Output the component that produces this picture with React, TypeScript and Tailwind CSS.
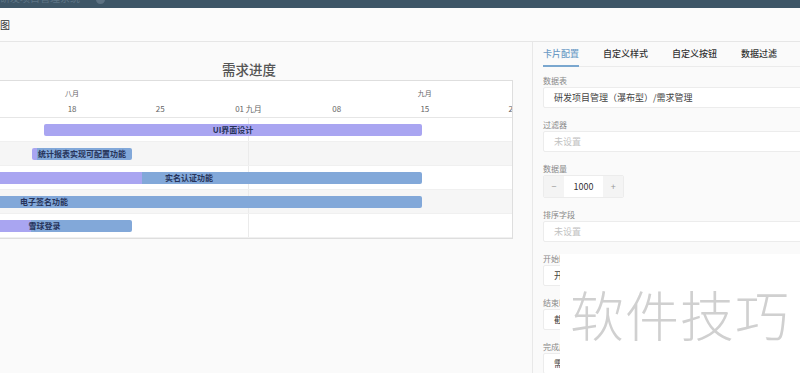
import React from "react";

const weeks = [
  { day: "18", month: "八月" },
  { day: "25" },
  { day: "01 九月" },
  { day: "08" },
  { day: "15", month: "九月" },
  { day: "22" },
];

// x positions are in chart px (chart box begins 15px left of the window)
const tasks = [
  { name: "UI界面设计", start: 58, end: 436, done: 436 },
  { name: "统计报表实现可配置功能", start: 46, end: 146, done: 51 },
  { name: "实名认证功能", start: -30, end: 436, done: 156 },
  { name: "电子签名功能", start: -320, end: 436, done: -320 },
  { name: "雪球登录", start: -29, end: 146, done: 45 },
];

const fields = [
  { label: "数据表", value: "研发项目管理（瀑布型）/需求管理" },
  { label: "过滤器", placeholder: "未设置" },
  { label: "数据量", stepper: true },
  { label: "排序字段", placeholder: "未设置" },
  { label: "开始时间字段", value: "开始时间" },
  { label: "结束时间字段", value: "截止时间" },
  { label: "完成度字段", value: "需求进度" },
];

const tabs = ["卡片配置", "自定义样式", "自定义按钮", "数据过滤"];

const Gantt = () => (
  <div className="-ml-[15px] w-[528px] flex flex-col">
    <div className="h-[38px] flex items-end justify-center pb-[3px]">
      <h1 className="text-[13.5px] leading-[16px] font-medium text-[#555]">需求进度</h1>
    </div>
    <div className="bg-white border border-[#dedede] overflow-hidden">
      <div className="h-[37px] border-b border-[#e6e6e6] flex pl-[42px] text-[#666]">
        {weeks.map((w) => (
          <div key={w.day} className="w-[88.2px] shrink-0 flex flex-col items-center">
            <span className="h-[12px] mt-[6px] text-[7px] leading-[12px]">{w.month ?? ""}</span>
            <span className="mt-[4px] text-[8px] leading-[12px] whitespace-nowrap">{w.day}</span>
          </div>
        ))}
      </div>
      {tasks.map((t, i) => {
        const pct = ((t.done - t.start) / (t.end - t.start)) * 100;
        return (
          <div
            key={t.name}
            className={`relative h-[24px] flex items-center border-b border-[#f0f0f0] ${
              i % 2 === 1 ? "bg-[#f6f6f6]" : "bg-white"
            }`}
          >
            <div className="absolute left-[262px] top-0 bottom-0 w-px bg-[#ebebeb]" />
            <div
              className="relative z-10 shrink-0 h-[12px] rounded-[2px] flex items-center justify-center text-[8px] font-semibold text-[#26335a] whitespace-nowrap"
              style={{
                marginLeft: t.start,
                width: t.end - t.start,
                background: `linear-gradient(to right, #a9a5f1 ${pct}%, #82a8d9 ${pct}%)`,
              }}
            >
              {t.name}
            </div>
          </div>
        );
      })}
    </div>
  </div>
);

const ConfigPanel = () => (
  <div className="flex-1 border-l border-[#e8e8e8] bg-[#fafafa] pl-[10px] overflow-hidden">
    <div className="h-[25px] flex items-center gap-6 border-b border-[#ebebeb]">
      {tabs.map((tab, i) => (
        <div
          key={tab}
          className={`relative h-full flex items-center text-[9px] font-medium whitespace-nowrap ${
            i === 0 ? "text-[#6d9cc6]" : "text-[#333]"
          }`}
        >
          {tab}
          {i === 0 && <div className="absolute left-0 right-0 -bottom-px h-[2px] bg-[#7aa7cf]" />}
        </div>
      ))}
    </div>
    <div className="mt-[8px]">
      {fields.map((f) => (
        <div key={f.label} className="mb-[11px]">
          <div className="h-[12px] leading-[12px] text-[8px] text-[#888]">{f.label}</div>
          {f.stepper ? (
            <div className="flex h-[23px] w-[81px] border border-[#ececec] rounded-[2px] overflow-hidden text-[9px]">
              <div className="w-[20px] bg-[#f4f4f4] flex items-center justify-center text-[#999]">−</div>
              <div className="w-[40px] bg-white flex items-center justify-center text-[#333]">1000</div>
              <div className="w-[20px] bg-[#f4f4f4] flex items-center justify-center text-[#999]">+</div>
            </div>
          ) : (
            <div className="w-[300px] h-[21px] bg-white border border-[#ececec] rounded-[2px] flex items-center pl-[10px] text-[9px]">
              {f.value ? (
                <span className="text-[#444]">{f.value}</span>
              ) : (
                <span className="text-[#c2c2c2]">{f.placeholder}</span>
              )}
            </div>
          )}
        </div>
      ))}
    </div>
  </div>
);

const App = () => {
  return (
    <div className="relative w-[800px] h-[373px] overflow-hidden bg-[#fafafa] flex flex-col font-['Noto_Sans_CJK_SC','Noto_Sans',sans-serif]">
      <div className="h-[8px] shrink-0 bg-[#3e5667] flex items-start gap-4 overflow-hidden">
        <span className="-mt-[8px] text-[10px] leading-[12px] text-[#5f7586] whitespace-nowrap">研发项目管理系统</span>
        <span className="-mt-[5px] w-[9px] h-[9px] rounded-full bg-[#5d7283]" />
      </div>
      <div className="h-[34px] shrink-0 bg-[#fbfbfb] border-b border-[#e6e6e6] flex items-center text-[10px] text-[#333]">
        图
      </div>
      <main className="flex flex-1 min-h-0">
        <div className="w-[532px] shrink-0">
          <Gantt />
        </div>
        <ConfigPanel />
      </main>
      <div className="absolute left-[560px] top-[254px] right-0 bottom-0 bg-white flex items-center pl-[10px] text-[54px] leading-none font-light tracking-[1px] text-[#d0d0d0]">
        软件技巧
      </div>
    </div>
  );
};

export default App;
